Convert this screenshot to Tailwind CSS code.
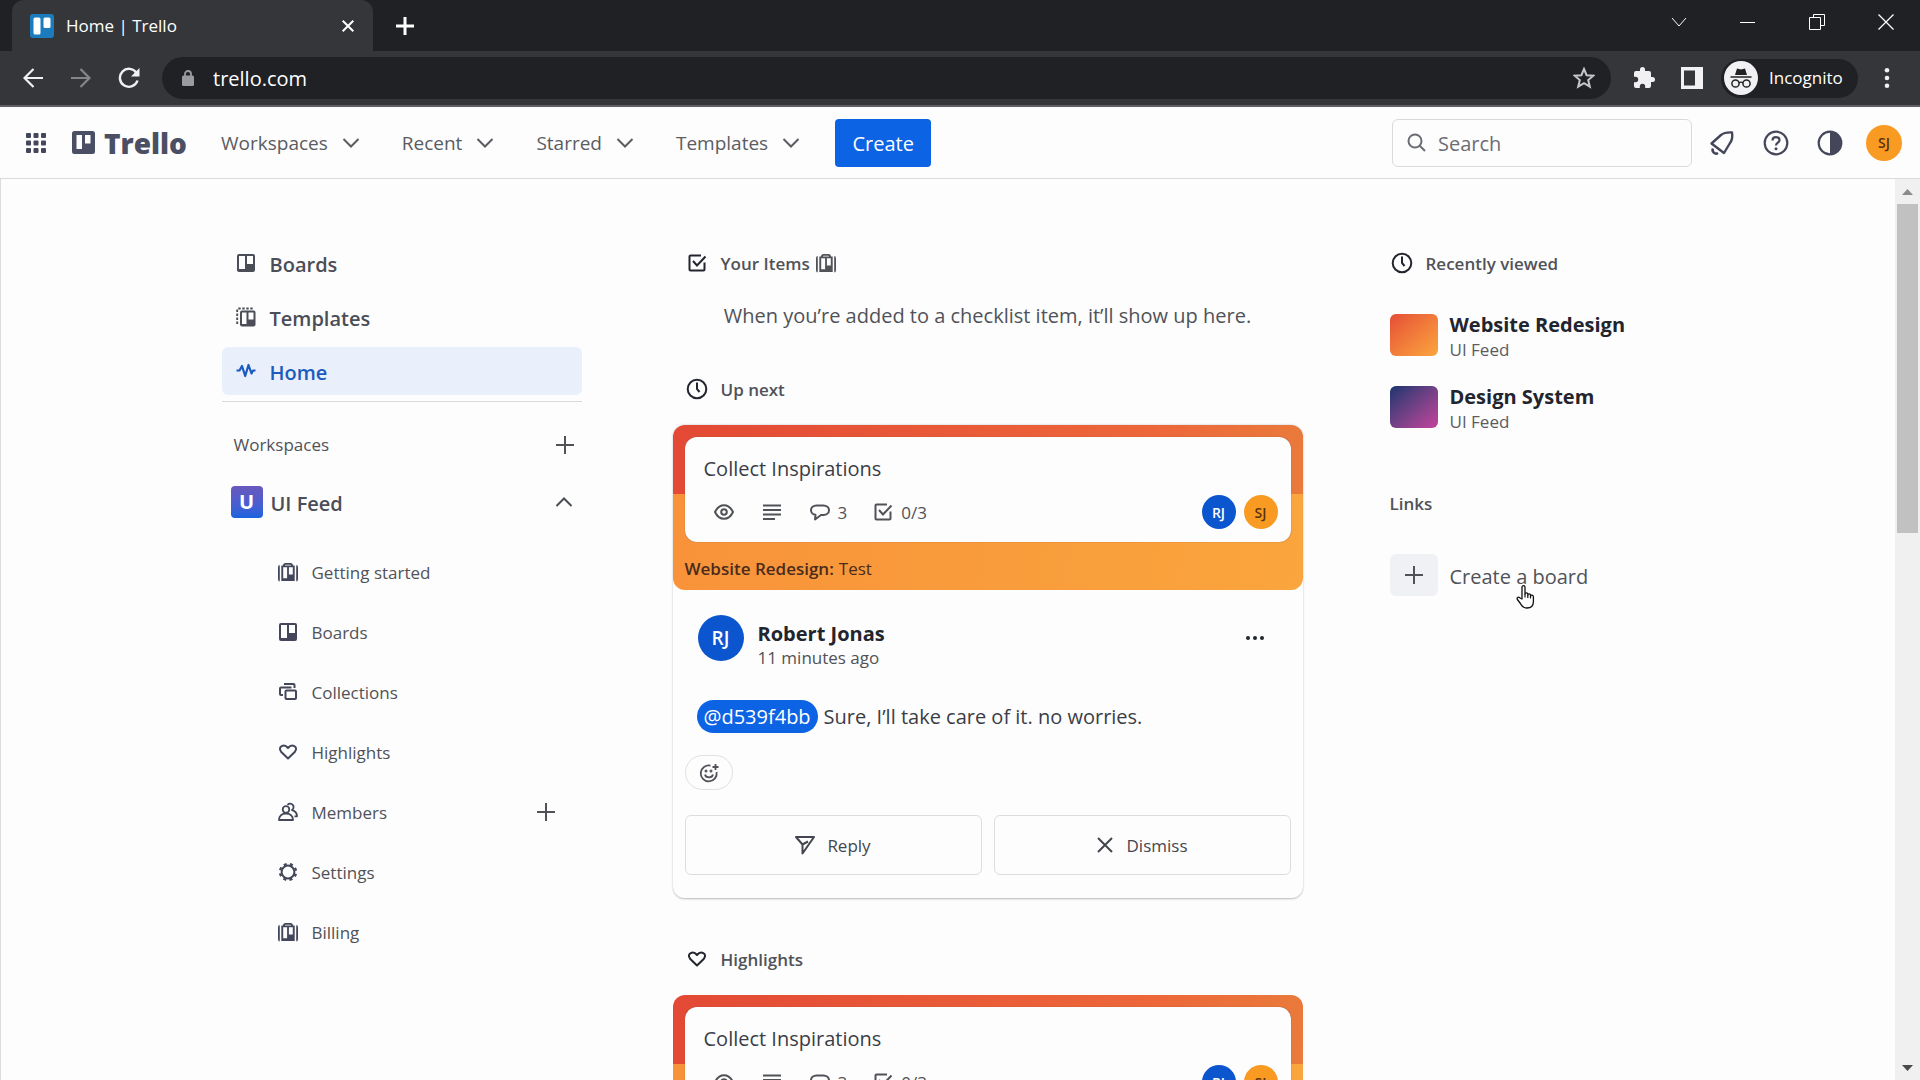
<!DOCTYPE html>
<html lang="en">
<head>
<meta charset="utf-8">
<title>Home | Trello</title>
<script src="https://cdn.jsdelivr.net/npm/@tailwindcss/browser@4"></script>
</head>
<body class="h-screen overflow-hidden flex flex-col bg-[#fdfdfd] font-['Open_Sans','Noto_Sans',sans-serif] text-[#505258]">

<svg class="hidden" aria-hidden="true">
  <symbol id="chev" viewBox="0 0 18 18"><path d="M1.500 5 9 12.500 16.500 5" fill="none" stroke="currentColor" stroke-width="2"/></symbol>
  <symbol id="plus" viewBox="0 0 18 18"><path d="M9 0v18M0 9h18" fill="none" stroke="currentColor" stroke-width="2"/></symbol>
  <symbol id="board" viewBox="0 0 20 20"><path fill="currentColor" fill-rule="evenodd" d="M3 1h14a2 2 0 0 1 2 2v14a2 2 0 0 1-2 2H3a2 2 0 0 1-2-2V3a2 2 0 0 1 2-2Zm0 2v13h6V3H3Zm8 0v8h6V3h-6Z"/></symbol>
  <symbol id="template" viewBox="0 0 20 20"><path fill="currentColor" fill-rule="evenodd" d="M6 3.500h11.500a2 2 0 0 1 2 2v12a2 2 0 0 1-2 2H6a2 2 0 0 1-2-2v-12a2 2 0 0 1 2-2Zm0 2v11.500h4.500V5.500H6Zm6.500 0v7h5v-7h-5Z"/><path d="M1.200 17V2.500a1 1 0 0 1 1-1H18" fill="none" stroke="currentColor" stroke-width="1.900" stroke-dasharray="2.400 1.600"/></symbol>
  <symbol id="pulse" viewBox="0 0 20 20"><path d="M0.500 9.500h3L6 5l3.200 10L12.500 4l3 8.500L17 9.500h2.500" fill="none" stroke="currentColor" stroke-width="2.200" stroke-linejoin="round"/></symbol>
  <symbol id="case" viewBox="0 0 20 20"><path fill="currentColor" fill-rule="evenodd" d="M5 3.500C5 2 6 1 7.500 1h5C14 1 15 2 15 3.500h1.700V19H3.300V3.500H5Zm2 0h6c0-.5-.2-.8-.7-.8H7.700c-.5 0-.7.300-.7.800ZM5.200 5.300v11h3.900v-11H5.200Zm5.700 0v7.200h3.900V5.300h-3.900Z"/><path d="M1.700 4C.9 4 .9 5 .9 5.500v11.500c0 1 .2 1.600.8 1.600M18.300 4c.8 0 .8 1 .8 1.500v11.500c0 1-.2 1.600-.8 1.600" fill="none" stroke="currentColor" stroke-width="1.800"/></symbol>
  <symbol id="stack" viewBox="0 0 20 20"><g fill="none" stroke="currentColor" stroke-width="2"><rect x="7.500" y="8.500" width="10.500" height="8.500" rx="1"/><path d="M5 13H3a1 1 0 0 1-1-1V6.500a1 1 0 0 1 1-1h10.500M6 2h9.500a1 1 0 0 1 1 1v3"/></g></symbol>
  <symbol id="heart" viewBox="0 0 20 20"><path d="M10 16.500 3.300 10C1 7.500 1.800 5 3.700 4.100 6 3 8.200 3.800 10 6c1.800-2.200 4-3 6.300-1.900C18.200 5 19 7.500 16.700 10Z" fill="none" stroke="currentColor" stroke-width="2" stroke-linejoin="round"/></symbol>
  <symbol id="people" viewBox="0 0 20 20"><g fill="none" stroke="currentColor" stroke-width="1.800" stroke-linejoin="round"><circle cx="8" cy="7.500" r="3.300"/><path d="M1 18c0-4 3-6.500 7-6.500s7 2.500 7 6.500ZM9.500 2.800a3.500 3.500 0 1 1 4.500 5.300c3 .8 5 3 5 6.200h-2.500"/></g></symbol>
  <symbol id="gear" viewBox="0 0 20 20"><circle cx="10" cy="10" r="6.400" fill="none" stroke="currentColor" stroke-width="2"/><circle cx="10" cy="10" r="8" fill="none" stroke="currentColor" stroke-width="2.400" stroke-dasharray="3 3.283" stroke-dashoffset="-1.700"/></symbol>
  <symbol id="check" viewBox="0 0 20 20"><g fill="none" stroke="currentColor" stroke-width="2"><path d="M14 2.500H3.500a1 1 0 0 0-1 1v13a1 1 0 0 0 1 1h13a1 1 0 0 0 1-1V9.500"/><path d="m6 8 4 4.500L18.500 3.500"/></g></symbol>
  <symbol id="clock" viewBox="0 0 22 22"><circle cx="11" cy="11" r="9.300" fill="none" stroke="currentColor" stroke-width="2"/><path d="M11 4.500V11l2.500 3" fill="none" stroke="currentColor" stroke-width="2"/></symbol>
  <symbol id="eye" viewBox="0 0 20 20"><path d="M10 3.200c4 0 7 2.600 9 6.800-2 4.200-5 6.800-9 6.800S3 14.200 1 10c2-4.200 5-6.800 9-6.800Z" fill="none" stroke="currentColor" stroke-width="2"/><circle cx="10" cy="10" r="2.800" fill="none" stroke="currentColor" stroke-width="2"/></symbol>
  <symbol id="lines" viewBox="0 0 20 20"><path d="M1 3.500h18M1 8h18M1 12.500h18M1 17h12" stroke="currentColor" stroke-width="2"/></symbol>
  <symbol id="bubble" viewBox="0 0 20 20"><path d="M6.500 3.500h7c3 0 5.500 2 5.500 4.700s-2.500 4.800-5.500 4.800H11l-6 4.500.5-4.700C3 12.500 1 10.500 1 8.200c0-2.700 2.500-4.700 5.500-4.700Z" fill="none" stroke="currentColor" stroke-width="2" stroke-linejoin="round"/></symbol>
</svg>

<!-- Browser window frame -->
<div class="bg-[#202124] h-[51px] shrink-0 flex text-white">
  <div class="ml-3 w-[361px] rounded-t-xl bg-[#35363a] flex items-center pl-[18px] pr-[19px]">
    <svg class="size-6 shrink-0" viewBox="0 0 24 24"><rect width="24" height="24" rx="3" fill="#1b7bbd"/><rect x="3.500" y="3.500" width="7" height="17" rx="1.500" fill="#fff"/><rect x="13.500" y="3.500" width="7" height="10.500" rx="1.500" fill="#fff"/></svg>
    <span class="ml-3 flex-1 text-[17px]">Home | Trello</span>
    <button aria-label="Close tab"><svg class="size-3" viewBox="0 0 12 12"><path d="m.7.700 10.600 10.600M11.300.700.700 11.300" stroke="#fff" stroke-width="2"/></svg></button>
  </div>
  <button class="ml-[23px]" aria-label="New tab"><svg class="size-[18px]" viewBox="0 0 18 18"><path d="M9 0v18M0 9h18" stroke="#fff" stroke-width="3"/></svg></button>
  <div class="ml-auto flex h-[43px] items-center gap-[53px] pr-[26px]">
    <button aria-label="Search tabs"><svg class="size-4" viewBox="0 0 16 16"><path d="m1 4 7 8 7-8" fill="none" stroke="#fff"/></svg></button>
    <button aria-label="Minimize"><svg class="size-4" viewBox="0 0 16 16"><path d="M0 8.500h15" stroke="#fff"/></svg></button>
    <button aria-label="Restore"><svg class="size-4" viewBox="0 0 16 16"><path d="M.5 3.500h11v12H.5zM4.500 3V.5h11v11H12" fill="none" stroke="#fff"/></svg></button>
    <button aria-label="Close window"><svg class="size-4" viewBox="0 0 16 16"><path d="m.5.500 15 15M15.500.500l-15 15" stroke="#fff" stroke-width="1.300"/></svg></button>
  </div>
</div>
<div class="bg-[#35363a] h-14 shrink-0 border-b-2 border-[#5f6064] flex items-center text-white">
  <button class="ml-[23px]" aria-label="Back"><svg class="size-5" viewBox="0 0 20 20"><path d="M20 10H2M10.500 1 1.500 10l9 9" fill="none" stroke="#f1f1f3" stroke-width="2.200"/></svg></button>
  <button class="ml-7" aria-label="Forward"><svg class="size-5" viewBox="0 0 20 20"><path d="M0 10h18M9.500 1l9 9-9 9" fill="none" stroke="#85868a" stroke-width="2.200"/></svg></button>
  <button class="ml-[27px]" aria-label="Reload"><svg class="size-[22px]" viewBox="0 0 22 22"><path d="M18.500 6A9 9 0 1 0 19.500 13.500" fill="none" stroke="#f1f1f3" stroke-width="2.400"/><path d="M21.500 1v8.500H13Z" fill="#f1f1f3"/></svg></button>
  <div class="ml-[22px] h-[42px] flex-1 rounded-full bg-[#202124] flex items-center pl-5 pr-4">
    <svg class="w-3 h-4" viewBox="0 0 12 16"><rect y="5.500" width="12" height="10.500" rx="1.500" fill="#9a9ba0"/><path d="M3 6V4a3 3 0 0 1 6 0v2" fill="none" stroke="#9a9ba0" stroke-width="1.800"/></svg>
    <input aria-label="Address" value="trello.com" class="ml-[19px] pt-[2px] flex-1 min-w-0 text-[20px] bg-transparent outline-none">
    <svg class="size-[22px]" viewBox="0 0 22 22"><path d="m11 2 2.600 6.200 6.700.500-5.100 4.400 1.600 6.600L11 16.200l-5.800 3.500 1.600-6.600L1.700 8.700l6.700-.500Z" fill="none" stroke="#c5c6ca" stroke-width="2"/></svg>
  </div>
  <button class="ml-[21px]" aria-label="Extensions"><svg class="size-6" viewBox="0 0 24 24"><path fill="#f1f1f3" d="M20.500 11H19V7a2 2 0 0 0-2-2h-4V3.500a2.500 2.500 0 0 0-5 0V5H4a2 2 0 0 0-2 2v3.800h1.500a2.700 2.700 0 0 1 0 5.400H2V20a2 2 0 0 0 2 2h3.800v-1.500a2.700 2.700 0 0 1 5.400 0V22H17a2 2 0 0 0 2-2v-4h1.500a2.500 2.500 0 0 0 0-5Z"/></svg></button>
  <button class="ml-[25px]" aria-label="Side panel"><svg class="size-[22px]" viewBox="0 0 22 22"><path fill="#f1f1f3" fill-rule="evenodd" d="M0 0h22v22H0ZM3 3.500v15h11v-15Z"/></svg></button>
  <button class="ml-[18px] h-[39px] w-[137px] rounded-full bg-[#202124] flex items-center pl-[3px] text-[17px]">
    <svg class="size-[34px] mr-[11px]" viewBox="0 0 34 34"><circle cx="17" cy="17" r="17" fill="#f1f1f3"/><path d="m11 14 2-6.500 4 1 4-1 2 6.500Z" fill="#202124"/><path d="M6.500 16h21" stroke="#202124" stroke-width="1.500"/><g fill="none" stroke="#202124" stroke-width="1.500"><circle cx="11.500" cy="22.500" r="3.600"/><circle cx="22.500" cy="22.500" r="3.600"/><path d="M15 22c1-1 3-1 4 0"/></g></svg>Incognito</button>
  <button class="ml-[26px] mr-[30px]" aria-label="Browser menu"><svg class="w-[6px] h-5" viewBox="0 0 6 20"><g fill="#f1f1f3"><circle cx="3" cy="2.300" r="2.300"/><circle cx="3" cy="10" r="2.300"/><circle cx="3" cy="17.700" r="2.300"/></g></svg></button>
</div>

<!-- App header -->
<header class="h-[72px] shrink-0 border-b border-[#d9dade] flex items-center text-[20px] text-[#5a5c62]">
  <button class="ml-[26px] text-[#44475a]" aria-label="More apps"><svg class="size-5" viewBox="0 0 20 20" fill="currentColor"><rect width="5" height="5" rx="1"/><rect x="7.500" width="5" height="5" rx="1"/><rect x="15" width="5" height="5" rx="1"/><rect y="7.500" width="5" height="5" rx="1"/><rect x="7.500" y="7.500" width="5" height="5" rx="1"/><rect x="15" y="7.500" width="5" height="5" rx="1"/><rect y="15" width="5" height="5" rx="1"/><rect x="7.500" y="15" width="5" height="5" rx="1"/><rect x="15" y="15" width="5" height="5" rx="1"/></svg></button>
  <a href="#" class="ml-[26px] w-[149px] shrink-0 flex items-center gap-[9px] text-[#4b4f63]"><svg class="size-[23px]" viewBox="0 0 23 23"><path fill="currentColor" fill-rule="evenodd" d="M2.500 0h18A2.500 2.500 0 0 1 23 2.500v18a2.500 2.500 0 0 1-2.500 2.500h-18A2.500 2.500 0 0 1 0 20.500v-18A2.500 2.500 0 0 1 2.500 0ZM4.500 4v14H10V4H4.500Zm8.500 0v8.500h5.500V4H13Z"/></svg><span class="font-extrabold text-[28px] leading-8">Trello</span></a>
  <nav class="flex items-center gap-[42px] text-[19px]">
    <button class="flex items-center gap-[14px]"><span class="pt-[2px]">Workspaces</span><svg class="size-[18px]"><use href="#chev"/></svg></button>
    <button class="flex items-center gap-[14px]"><span class="pt-[2px]">Recent</span><svg class="size-[18px]"><use href="#chev"/></svg></button>
    <button class="flex items-center gap-[14px]"><span class="pt-[2px]">Starred</span><svg class="size-[18px]"><use href="#chev"/></svg></button>
    <button class="flex items-center gap-[14px]"><span class="pt-[2px]">Templates</span><svg class="size-[18px]"><use href="#chev"/></svg></button>
  </nav>
  <button class="ml-[35px] w-24 h-12 pt-[2px] rounded-[4px] bg-[#0c63e4] text-white">Create</button>
  <div class="ml-auto w-[300px] h-12 rounded-md border border-[#d9dade] flex items-center pl-[14px] text-[#6b6d74]">
    <svg class="size-[19px] shrink-0" viewBox="0 0 19 19"><circle cx="8" cy="8" r="6.500" fill="none" stroke="currentColor" stroke-width="2"/><path d="m12.500 12.500 5.500 5.500" stroke="currentColor" stroke-width="2"/></svg>
    <input type="search" placeholder="Search" aria-label="Search" class="ml-3 pt-[2px] min-w-0 flex-1 bg-transparent outline-none placeholder:text-[#6b6d74]">
  </div>
  <div class="ml-[17px] mr-[18px] flex items-center gap-[28px] text-[#44475a]">
    <button aria-label="Notifications"><svg class="size-[26px]" viewBox="0 0 26 26"><path d="M2.500 13.500 12 5c3.500-3 7-2.600 11-2.600.5 3.500 1 7-2 10.600L15 23Z" fill="none" stroke="currentColor" stroke-width="2.400" stroke-linejoin="round"/><path d="M4 18.500a3.500 3.500 0 0 0 5 4.500" fill="none" stroke="currentColor" stroke-width="2.600"/></svg></button>
    <button aria-label="Help"><svg class="size-[26px]" viewBox="0 0 26 26"><circle cx="13" cy="13" r="11.300" fill="none" stroke="currentColor" stroke-width="2.200"/><path d="M9.500 10.500c0-4.500 7-4.200 7-.300 0 2.500-3.500 2.500-3.500 5.300" fill="none" stroke="currentColor" stroke-width="2.200"/><circle cx="13" cy="18.800" r="1.500" fill="currentColor"/></svg></button>
    <button aria-label="Theme"><svg class="size-[26px]" viewBox="0 0 26 26"><circle cx="13" cy="13" r="11.300" fill="none" stroke="currentColor" stroke-width="2.200"/><path d="M13 1.500a11.500 11.500 0 0 1 0 23Z" fill="currentColor"/></svg></button>
    <button class="-ml-[5px] size-9 rounded-full bg-[#f99a23] text-[14px] font-semibold text-[#5a3310]">SJ</button>
  </div>
</header>

<div class="flex-1 min-h-0 flex">
  <main class="flex-1 min-w-0 border-l border-[#dcdce0] overflow-hidden px-8 pt-[60px]">
    <div class="mx-auto max-w-[1453px] flex items-start">

      <!-- Sidebar -->
      <aside class="w-[360px] shrink-0">
        <nav class="flex flex-col gap-[6px] pb-[6px] border-b border-[#d9dade] text-[20px] font-semibold text-[#4b4d57]">
          <a href="#" class="h-12 rounded-md flex items-center gap-[14px] pl-[14px]"><svg class="size-5"><use href="#board"/></svg><span class="pt-[3px]">Boards</span></a>
          <a href="#" class="h-12 rounded-md flex items-center gap-[14px] pl-[14px]"><svg class="size-5"><use href="#template"/></svg><span class="pt-[3px]">Templates</span></a>
          <a href="#" class="h-12 rounded-md flex items-center gap-[14px] pl-[14px] bg-[#e9effb] text-[#1c5bbd]"><svg class="size-5"><use href="#pulse"/></svg><span class="pt-[3px]">Home</span></a>
        </nav>
        <div class="mt-[21px] h-11 flex items-center justify-between pl-3 pr-2 text-[17px] font-medium">
          <h2>Workspaces</h2>
          <button aria-label="Create workspace"><svg class="size-[18px]"><use href="#plus"/></svg></button>
        </div>
        <button class="mt-[19px] h-8 w-full flex items-center pl-[9px] pr-[9px] text-[20px] font-semibold text-[#4b4d57]">
          <span class="size-8 rounded-[4px] bg-linear-to-b from-[#6858bd] to-[#1763de] text-white font-bold flex items-center justify-center">U</span>
          <span class="ml-2 pt-[3px] flex-1 text-left">UI Feed</span>
          <svg class="size-[18px] rotate-180"><use href="#chev"/></svg>
        </button>
        <ul class="mt-6 pl-14 pr-[27px] text-[17px]">
          <li class="h-[60px] flex items-center"><a href="#" class="flex items-center gap-[14px]"><svg class="size-5 text-[#44475a]"><use href="#case"/></svg><span class="pt-[2px]">Getting started</span></a></li>
          <li class="h-[60px] flex items-center"><a href="#" class="flex items-center gap-[14px]"><svg class="size-5 text-[#44475a]"><use href="#board"/></svg><span class="pt-[2px]">Boards</span></a></li>
          <li class="h-[60px] flex items-center"><a href="#" class="flex items-center gap-[14px]"><svg class="size-5 text-[#44475a]"><use href="#stack"/></svg><span class="pt-[2px]">Collections</span></a></li>
          <li class="h-[60px] flex items-center"><a href="#" class="flex items-center gap-[14px]"><svg class="size-5 text-[#44475a]"><use href="#heart"/></svg><span class="pt-[2px]">Highlights</span></a></li>
          <li class="h-[60px] flex items-center justify-between"><a href="#" class="flex items-center gap-[14px]"><svg class="size-5 text-[#44475a]"><use href="#people"/></svg><span class="pt-[2px]">Members</span></a><button aria-label="Add members"><svg class="size-[18px]"><use href="#plus"/></svg></button></li>
          <li class="h-[60px] flex items-center"><a href="#" class="flex items-center gap-[14px]"><svg class="size-5 text-[#44475a]"><use href="#gear"/></svg><span class="pt-[2px]">Settings</span></a></li>
          <li class="h-[60px] flex items-center"><a href="#" class="flex items-center gap-[14px]"><svg class="size-5 text-[#44475a]"><use href="#case"/></svg><span class="pt-[2px]">Billing</span></a></li>
        </ul>
      </aside>

      <!-- Feed -->
      <section class="ml-[91px] w-[630px] shrink-0">
        <h2 class="h-12 flex items-center pl-[14px] text-[17px] font-semibold"><svg class="size-5 mr-[14px] text-[#22252e]"><use href="#check"/></svg><span class="pt-[2px]">Your Items</span><svg class="size-5 ml-[6px]"><use href="#case"/></svg></h2>
        <p class="mt-[14px] text-center text-[20px] leading-[30px]">When you’re added to a checklist item, it’ll show up here.</p>

        <h2 class="mt-[34px] h-12 flex items-center pl-[13px] text-[17px] font-semibold"><svg class="size-[22px] mr-[13px] text-[#22252e]"><use href="#clock"/></svg><span class="pt-[2px]">Up next</span></h2>
        <article class="mt-3 rounded-xl border-b border-[#c9cace] shadow-[0_0_2px_#b4b6be]">
          <div class="rounded-xl px-3 pt-3 bg-no-repeat bg-[image:linear-gradient(100deg,#e34935,#ed673a_75%,#e97b3b),linear-gradient(100deg,#f8923a,#faa53d)] bg-[size:100%_69px,100%_100%]">
            <div class="rounded-xl bg-[#fdfdfd] pt-[17px] pb-[13px] pl-[19px] pr-[13px] shadow-[0_0_1px_#7a5040]">
              <h3 class="text-[20px] leading-[30px] text-[#3b3d47]">Collect Inspirations</h3>
              <div class="mt-[11px] h-[34px] flex items-center text-[17px]">
                <svg class="ml-[10px] size-5"><use href="#eye"/></svg>
                <svg class="ml-7 size-5"><use href="#lines"/></svg>
                <svg class="ml-7 size-5"><use href="#bubble"/></svg><span class="ml-2 pt-[2px]">3</span>
                <svg class="ml-[26px] size-5"><use href="#check"/></svg><span class="ml-2 pt-[2px]">0/3</span>
                <span class="ml-auto size-[34px] rounded-full bg-[#0b55cf] text-white text-[14px] font-semibold flex items-center justify-center">RJ</span>
                <span class="ml-2 size-[34px] rounded-full bg-[#f99a23] text-[#5a3310] text-[14px] font-semibold flex items-center justify-center">SJ</span>
              </div>
            </div>
            <p class="h-12 pt-[6px] flex items-center gap-[5px] text-[17px] text-[#4a2b1c]"><strong class="font-semibold">Website Redesign:</strong> Test</p>
          </div>
          <div class="px-3 pt-[25px] pb-[23px]">
            <div class="flex items-start pl-[13px]">
              <span class="size-[46px] rounded-full bg-[#0b55cf] text-white text-[19px] font-semibold flex items-center justify-center">RJ</span>
              <div class="ml-[14px] pt-[6px] flex-1">
                <h4 class="text-[20px] leading-[25px] font-bold text-[#22252e]">Robert Jonas</h4>
                <p class="text-[17px] leading-6">11 minutes ago</p>
              </div>
              <button class="mt-5 mr-[27px]" aria-label="Comment actions"><svg class="w-[18px] h-1.5" viewBox="0 0 18 6"><g fill="#22252e"><circle cx="2" cy="3" r="2"/><circle cx="9" cy="3" r="2"/><circle cx="16" cy="3" r="2"/></g></svg></button>
            </div>
            <p class="mt-[30px] pl-3 flex items-center gap-[6px] text-[20px] leading-[33px] text-[#3b3d47]"><a href="#" class="rounded-full bg-[#0c63e4] text-white px-[7px]">@d539f4bb</a>Sure, I’ll take care of it. no worries.</p>
            <button class="mt-[22px] w-12 h-[35px] rounded-full border border-[#dfe0e4] flex items-center justify-center" aria-label="Add reaction"><svg class="size-5" viewBox="0 0 20 20" fill="none" stroke="currentColor" stroke-width="1.800"><path d="M11.500 2.600A8 8 0 1 0 17.600 9"/><path d="M6 11.500c.8 3.800 7.200 3.800 8 0M16.500 1v6M13.500 4h6"/><circle cx="7" cy="8" r=".6"/><circle cx="12" cy="8" r=".6"/></svg></button>
            <div class="mt-[25px] grid grid-cols-2 gap-3 text-[17px] text-[#44464f]">
              <button class="h-[60px] rounded-md border border-[#dcdde1] flex items-center justify-center gap-3"><svg class="size-5" viewBox="0 0 20 20" fill="none" stroke="currentColor" stroke-width="2" stroke-linejoin="round"><path d="M1 2h18L7.500 18.500v-9ZM1 2l6.500 7.500L13 6.500"/></svg><span class="pt-[2px]">Reply</span></button>
              <button class="h-[60px] rounded-md border border-[#dcdde1] flex items-center justify-center gap-[14px]"><svg class="size-4" viewBox="0 0 16 16"><path d="m1 1 14 14M15 1 1 15" stroke="currentColor" stroke-width="2"/></svg><span class="pt-[2px]">Dismiss</span></button>
            </div>
          </div>
        </article>

        <h2 class="mt-9 h-12 flex items-center pl-[14px] text-[17px] font-semibold"><svg class="size-5 mr-[14px] text-[#22252e]"><use href="#heart"/></svg><span class="pt-[2px]">Highlights</span></h2>
        <article class="mt-3 rounded-xl">
          <div class="rounded-xl px-3 pt-3 bg-no-repeat bg-[image:linear-gradient(100deg,#e34935,#ed673a_75%,#e97b3b),linear-gradient(100deg,#f8923a,#faa53d)] bg-[size:100%_69px,100%_100%]">
            <div class="rounded-xl bg-[#fdfdfd] pt-[17px] pb-[13px] pl-[19px] pr-[13px] shadow-[0_0_1px_#7a5040]">
              <h3 class="text-[20px] leading-[30px] text-[#3b3d47]">Collect Inspirations</h3>
              <div class="mt-[11px] h-[34px] flex items-center text-[17px]">
                <svg class="ml-[10px] size-5"><use href="#eye"/></svg>
                <svg class="ml-7 size-5"><use href="#lines"/></svg>
                <svg class="ml-7 size-5"><use href="#bubble"/></svg><span class="ml-2 pt-[2px]">3</span>
                <svg class="ml-[26px] size-5"><use href="#check"/></svg><span class="ml-2 pt-[2px]">0/3</span>
                <span class="ml-auto size-[34px] rounded-full bg-[#0b55cf] text-white text-[14px] font-semibold flex items-center justify-center">RJ</span>
                <span class="ml-2 size-[34px] rounded-full bg-[#f99a23] text-[#5a3310] text-[14px] font-semibold flex items-center justify-center">SJ</span>
              </div>
            </div>
            <p class="h-12"></p>
          </div>
        </article>
      </section>

      <!-- Recent boards and links -->
      <aside class="ml-[87px] flex-1 min-w-0">
        <h2 class="h-12 flex items-center gap-[13px] pl-[1px] text-[17px] font-semibold"><svg class="size-[22px] text-[#22252e]"><use href="#clock"/></svg><span class="pt-[2px]">Recently viewed</span></h2>
        <ul class="mt-6 flex flex-col gap-6">
          <li><a href="#" class="h-12 flex gap-3"><span class="mt-[3px] w-12 h-[42px] rounded-md bg-linear-to-br from-[#e54c36] to-[#faa53d]"></span><span class="text-[20px] leading-7 font-bold text-[#22252e]">Website Redesign<small class="block text-[17px] leading-[22px] font-normal text-[#5a5c62]">UI Feed</small></span></a></li>
          <li><a href="#" class="h-12 flex gap-3"><span class="mt-[3px] w-12 h-[42px] rounded-md bg-linear-to-br from-[#16336f] to-[#c63f9c]"></span><span class="text-[20px] leading-7 font-bold text-[#22252e]">Design System<small class="block text-[17px] leading-[22px] font-normal text-[#5a5c62]">UI Feed</small></span></a></li>
        </ul>
        <h2 class="mt-12 h-12 flex items-center text-[17px] font-semibold"><span class="pt-[2px]">Links</span></h2>
        <button class="relative mt-[27px] h-[42px] flex items-center gap-3 text-[20px]">
          <span class="w-12 h-[42px] rounded-md bg-[#f0f1f4] flex items-center justify-center"><svg class="size-[18px]"><use href="#plus"/></svg></span>
          <span class="pt-1">Create a board</span>
          <svg class="absolute left-[126px] top-[31px] w-[19px] h-6" viewBox="0 0 19 24"><path d="M6 14V2.200a1.500 1.500 0 0 1 3 0V9c0-1.600 2.800-1.600 2.800 0v1c0-1.500 2.700-1.400 2.700.2V11c.3-1.300 2.900-1.200 2.900.8v4.700c0 4-2 6.500-6.500 6.500-3.500 0-5-1.500-6.500-4.500L1.400 14.500c-1-1.800.8-3.200 2.300-1.800Z" fill="#fff" stroke="#111" stroke-width="1.300" stroke-linejoin="round"/><path d="M9 9v3.500M11.800 10v3M14.500 11v2.500" stroke="#111" stroke-width="1.200"/></svg>
        </button>
      </aside>
    </div>
  </main>

  <!-- Page scrollbar -->
  <div class="w-[25px] shrink-0 bg-[#f0f0f1] flex flex-col items-center" aria-hidden="true">
    <svg class="w-[11px] h-[25px] shrink-0" viewBox="0 0 11 25"><path d="M5.500 10 11 16H0Z" fill="#8b8b8b"/></svg>
    <div class="w-[21px] h-[329px] bg-[#c1c1c1]"></div>
    <svg class="mt-auto w-[11px] h-[25px] shrink-0" viewBox="0 0 11 25"><path d="M5.500 16 0 10h11Z" fill="#4a4a4a"/></svg>
  </div>
</div>
</body>
</html>
